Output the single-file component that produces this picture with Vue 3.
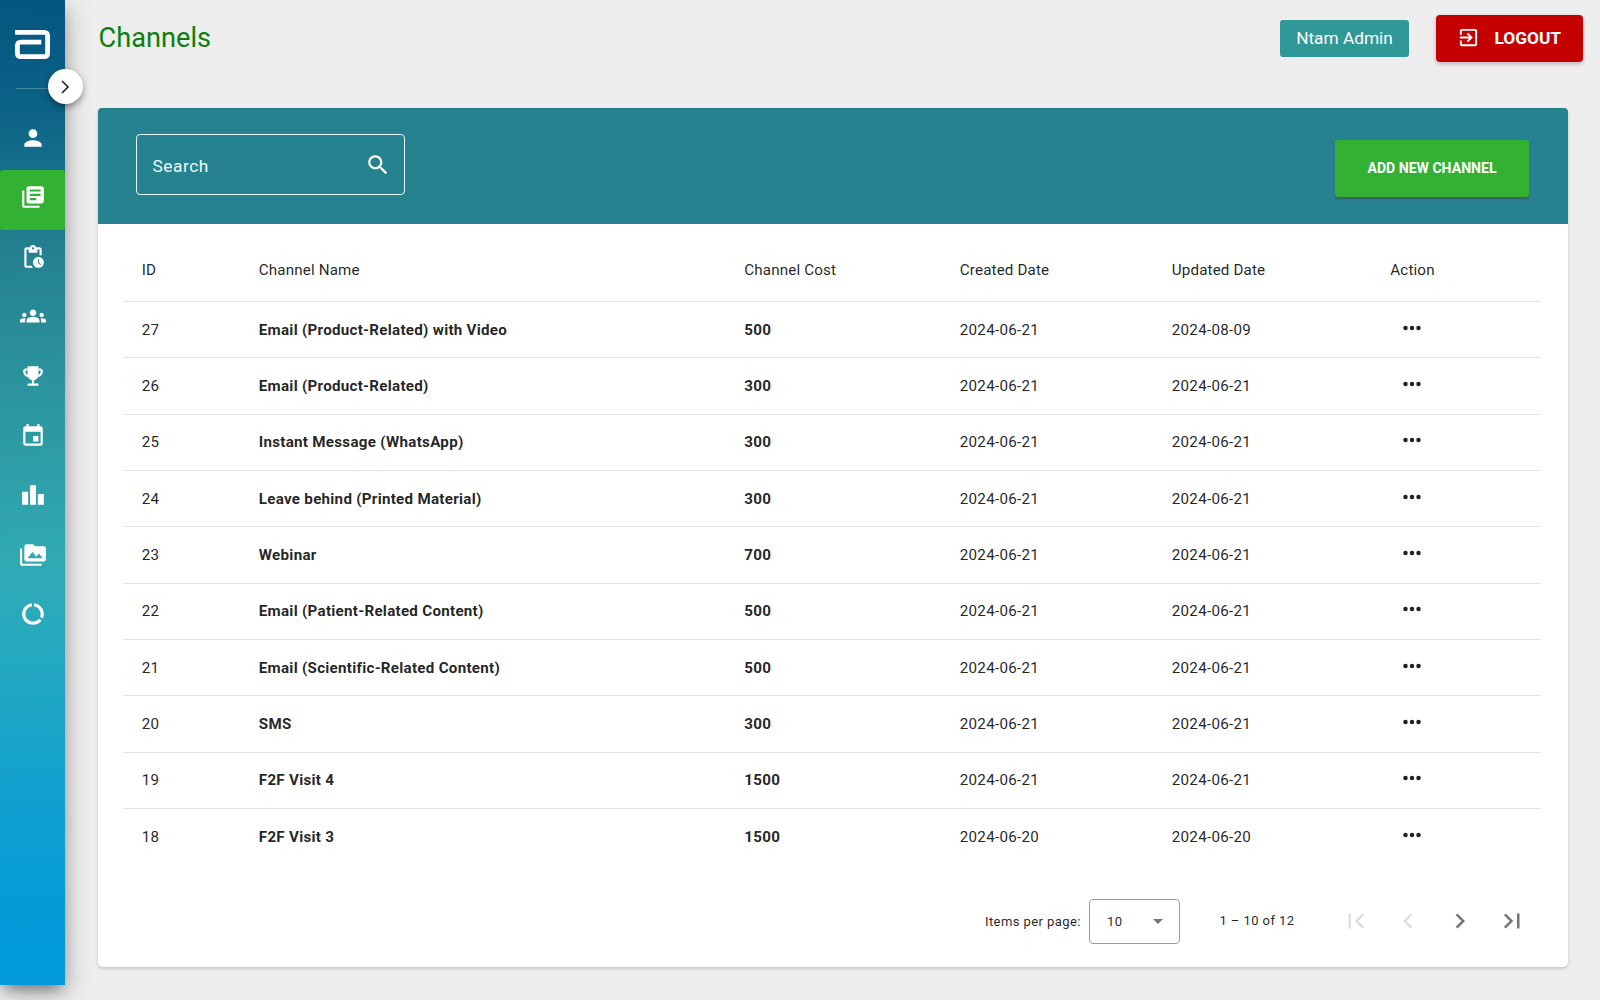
<script setup>
import { ref, computed } from 'vue'

const search = ref('')
const activeMenu = ref('channels')
const total = ref(12)
const pageSize = ref(10)

const menu = [
  { name: 'users', icon: 'M12 12c2.21 0 4-1.79 4-4s-1.79-4-4-4-4 1.79-4 4 1.79 4 4 4zm0 2c-2.67 0-8 1.34-8 4v2h16v-2c0-2.66-5.33-4-8-4z' },
  { name: 'channels', icon: 'M4 6H2v14c0 1.1.9 2 2 2h14v-2H4V6zm16-4H8c-1.1 0-2 .9-2 2v12c0 1.1.9 2 2 2h12c1.1 0 2-.9 2-2V4c0-1.1-.9-2-2-2zm-1 9H9V9h10v2zm-4 4H9v-2h6v2zm4-8H9V5h10v2z' },
  { name: 'pending', icon: 'M17 12c-2.76 0-5 2.24-5 5s2.24 5 5 5 5-2.24 5-5-2.24-5-5-5zm1.65 7.35L16.5 17.2V14h1v2.79l1.85 1.85-.7.71zM18 3h-3.18C14.4 1.84 13.3 1 12 1s-2.4.84-2.82 2H6c-1.1 0-2 .9-2 2v15c0 1.1.9 2 2 2h6.11c-.59-.57-1.07-1.25-1.42-2H6V5h2v3h8V5h2v5.08c.71.1 1.38.31 2 .6V5c0-1.1-.9-2-2-2zm-6 2c-.55 0-1-.45-1-1s.45-1 1-1 1 .45 1 1-.45 1-1 1z' },
  { name: 'groups', icon: 'M12 12.75c1.63 0 3.07.39 4.24.9 1.08.48 1.76 1.56 1.76 2.73V18H6v-1.61c0-1.18.68-2.26 1.76-2.73 1.17-.52 2.61-.91 4.24-.91zM4 13c1.1 0 2-.9 2-2s-.9-2-2-2-2 .9-2 2 .9 2 2 2zm1.13 1.1c-.37-.06-.74-.1-1.13-.1-.99 0-1.93.21-2.78.58C.48 14.9 0 15.62 0 16.43V18h4.5v-1.61c0-.83.23-1.61.63-2.29zM20 13c1.1 0 2-.9 2-2s-.9-2-2-2-2 .9-2 2 .9 2 2 2zm4 3.43c0-.81-.48-1.53-1.22-1.85-.85-.37-1.79-.58-2.78-.58-.39 0-.76.04-1.13.1.4.68.63 1.46.63 2.29V18H24v-1.57zM12 6c1.66 0 3 1.34 3 3s-1.34 3-3 3-3-1.34-3-3 1.34-3 3-3z' },
  { name: 'awards', icon: 'M19 5h-2V3H7v2H5c-1.1 0-2 .9-2 2v1c0 2.55 1.92 4.63 4.39 4.94.63 1.5 1.98 2.63 3.61 2.96V19H7v2h10v-2h-4v-3.1c1.63-.33 2.98-1.46 3.61-2.96C19.08 12.63 21 10.55 21 8V7c0-1.1-.9-2-2-2zM5 8V7h2v3.82C5.84 10.4 5 9.3 5 8zm14 0c0 1.3-.84 2.4-2 2.82V7h2v1z' },
  { name: 'events', icon: 'M17 12h-5v5h5v-5zM16 1v2H8V1H6v2H5c-1.11 0-1.99.9-1.99 2L3 19c0 1.1.89 2 2 2h14c1.1 0 2-.9 2-2V5c0-1.1-.9-2-2-2h-1V1h-2zm3 18H5V8h14v11z' },
  { name: 'reports', icon: 'M7.5 21H2V9h5.5v12zm7.25-18h-5.5v18h5.5V3zM22 11h-5.5v10H22V11z' },
  { name: 'media', icon: 'M2 6H0v5h.01L0 20c0 1.1.9 2 2 2h18v-2H2V6zm20-2h-8l-2-2H6c-1.1 0-1.99.9-1.99 2L4 16c0 1.1.9 2 2 2h16c1.1 0 2-.9 2-2V6c0-1.1-.9-2-2-2zM7 15l4.5-6 3.5 4.51 2.5-3.01L21 15H7z' },
  { name: 'usage', icon: 'M13 2.05v3.03c3.39.49 6 3.39 6 6.92 0 .9-.18 1.75-.48 2.54l2.6 1.53c.56-1.24.88-2.62.88-4.07 0-5.18-3.95-9.45-9-9.95zM12 19c-3.87 0-7-3.13-7-7 0-3.53 2.61-6.43 6-6.92V2.05c-5.06.5-9 4.76-9 9.95 0 5.52 4.47 10 9.99 10 3.31 0 6.24-1.61 8.06-4.09l-2.6-1.53C16.17 17.98 14.21 19 12 19z' },
]

const channels = ref([
  { id: 27, name: 'Email (Product-Related) with Video', cost: 500, created: '2024-06-21', updated: '2024-08-09' },
  { id: 26, name: 'Email (Product-Related)', cost: 300, created: '2024-06-21', updated: '2024-06-21' },
  { id: 25, name: 'Instant Message (WhatsApp)', cost: 300, created: '2024-06-21', updated: '2024-06-21' },
  { id: 24, name: 'Leave behind (Printed Material)', cost: 300, created: '2024-06-21', updated: '2024-06-21' },
  { id: 23, name: 'Webinar', cost: 700, created: '2024-06-21', updated: '2024-06-21' },
  { id: 22, name: 'Email (Patient-Related Content)', cost: 500, created: '2024-06-21', updated: '2024-06-21' },
  { id: 21, name: 'Email (Scientific-Related Content)', cost: 500, created: '2024-06-21', updated: '2024-06-21' },
  { id: 20, name: 'SMS', cost: 300, created: '2024-06-21', updated: '2024-06-21' },
  { id: 19, name: 'F2F Visit 4', cost: 1500, created: '2024-06-21', updated: '2024-06-21' },
  { id: 18, name: 'F2F Visit 3', cost: 1500, created: '2024-06-20', updated: '2024-06-20' },
])

const rows = computed(() =>
  channels.value.filter((c) => c.name.toLowerCase().includes(search.value.toLowerCase()))
)

const pagers = [
  { name: 'first', disabled: true, icon: 'M18.41 16.59L13.82 12l4.59-4.59L17 6l-6 6 6 6zM6 6h2v12H6z' },
  { name: 'prev', disabled: true, icon: 'M15.41 7.41L14 6l-6 6 6 6 1.41-1.41L10.83 12z' },
  { name: 'next', disabled: false, icon: 'M10 6L8.59 7.41 13.17 12l-4.58 4.59L10 18l6-6z' },
  { name: 'last', disabled: false, icon: 'M5.59 7.41L10.18 12l-4.59 4.59L7 18l6-6-6-6zM16 6h2v12h-2z' },
]
</script>

<template>
  <div class="layout">
    <aside class="sidebar">
      <svg class="logo" viewBox="0 0 35 29">
        <path d="M0 2.4H29Q32.6 2.4 32.6 6V23Q32.6 26.6 29 26.6H6Q2.4 26.6 2.4 23V15.8Q2.4 12.2 6 12.2H26.3" />
      </svg>
      <div class="divider"></div>
      <button class="toggle">
        <svg viewBox="0 0 12 14"><path d="M3 1l6 6-6 6" /></svg>
      </button>
      <nav>
        <a
          v-for="item in menu"
          :key="item.name"
          class="nav-item"
          :class="{ active: item.name === activeMenu }"
          @click="activeMenu = item.name"
        >
          <svg class="icon" viewBox="0 0 24 24"><path :d="item.icon" /></svg>
        </a>
      </nav>
    </aside>

    <main class="content">
      <header class="topbar">
        <h1>Channels</h1>
        <span class="user">Ntam Admin</span>
        <button class="logout">
          <svg viewBox="0 0 24 24"><path d="M10.09 15.59L11.5 17l5-5-5-5-1.41 1.41L12.67 11H3v2h9.67l-2.58 2.59zM19 3H5c-1.11 0-2 .9-2 2v4h2V5h14v14H5v-4H3v4c0 1.1.89 2 2 2h14c1.1 0 2-.9 2-2V5c0-1.1-.9-2-2-2z" /></svg>
          <span>LOGOUT</span>
        </button>
      </header>

      <section class="card">
        <div class="toolbar">
          <label class="search">
            <input v-model="search" placeholder="Search">
            <svg class="icon" viewBox="0 0 24 24"><path d="M15.5 14h-.79l-.28-.27C15.41 12.59 16 11.11 16 9.5 16 5.91 13.09 3 9.5 3S3 5.91 3 9.5 5.91 16 9.5 16c1.61 0 3.09-.59 4.23-1.57l.27.28v.79l5 4.99L20.49 19l-4.99-5zm-6 0C7.01 14 5 11.99 5 9.5S7.01 5 9.5 5 14 7.01 14 9.5 11.99 14 9.5 14z" /></svg>
          </label>
          <button class="add">ADD NEW CHANNEL</button>
        </div>

        <table>
          <colgroup>
            <col class="c-id">
            <col class="c-name">
            <col class="c-cost">
            <col class="c-created">
            <col class="c-updated">
            <col>
          </colgroup>
          <thead>
            <tr>
              <th>ID</th>
              <th>Channel Name</th>
              <th>Channel Cost</th>
              <th>Created Date</th>
              <th>Updated Date</th>
              <th>Action</th>
            </tr>
          </thead>
          <tbody>
            <tr v-for="row in rows" :key="row.id">
              <td>{{ row.id }}</td>
              <td class="bold">{{ row.name }}</td>
              <td class="bold">{{ row.cost }}</td>
              <td>{{ row.created }}</td>
              <td>{{ row.updated }}</td>
              <td>
                <svg class="icon more" viewBox="0 0 24 24">
                  <circle cx="6" cy="12" r="2.1" />
                  <circle cx="12" cy="12" r="2.1" />
                  <circle cx="18" cy="12" r="2.1" />
                </svg>
              </td>
            </tr>
          </tbody>
        </table>

        <footer class="paginator">
          <span class="per-page">Items per page:</span>
          <div class="select">
            <span>{{ pageSize }}</span>
            <i class="arrow"></i>
          </div>
          <span class="range">1 – {{ pageSize }} of {{ total }}</span>
          <button v-for="p in pagers" :key="p.name" class="pager" :disabled="p.disabled">
            <svg viewBox="0 0 24 24"><path :d="p.icon" /></svg>
          </button>
        </footer>
      </section>
    </main>
  </div>
</template>

<style>
body {
  background: #eeeeee;
}
</style>

<style scoped>
.layout {
  display: flex;
  height: 1000px;
  overflow: hidden;
  background: #eeeeee;
  font-family: Roboto, sans-serif;
  color: rgba(0, 0, 0, 0.87);
}

.layout * {
  box-sizing: border-box;
}

button {
  font-family: inherit;
  border: none;
  padding: 0;
  cursor: pointer;
}

svg {
  display: block;
  fill: currentColor;
}

.icon {
  width: 26px;
  height: 26px;
}

.sidebar {
  position: relative;
  flex: none;
  width: 65px;
  height: 985px;
  padding-top: 30px;
  color: #fff;
  background: linear-gradient(178deg, #04567f 0%, #0b6287 11%, #24808f 25%, #2d99a2 43%, #30aab3 57%, #25a9c0 66%, #0c9fd2 84%, #0099da 97%);
  box-shadow: 0 9px 12px -5px rgba(0, 0, 0, 0.35), 3px 8px 24px rgba(60, 50, 50, 0.32);
}

.logo {
  width: 35px;
  height: 29px;
  margin-left: 15px;
  fill: none;
  stroke: #fff;
  stroke-width: 4.8;
}

.divider {
  width: 33px;
  height: 1px;
  margin: 29px 0 0 16px;
  background: rgba(255, 255, 255, 0.25);
}

.toggle {
  position: absolute;
  top: 69px;
  left: 47.5px;
  width: 35px;
  height: 35px;
  border-radius: 50%;
  background: #fff;
  color: #222;
  display: flex;
  align-items: center;
  justify-content: center;
  box-shadow: 0 3px 6px rgba(0, 0, 0, 0.4);
}

.toggle svg {
  width: 12px;
  height: 14px;
  fill: none;
  stroke: currentColor;
  stroke-width: 1.6;
}

nav {
  padding-top: 21.6px;
}

.nav-item {
  display: flex;
  justify-content: center;
  height: 59.6px;
  padding-top: 14px;
  border-radius: 3px;
  cursor: pointer;
}

.nav-item.active {
  background: #32b132;
}

.content {
  flex: 1;
  padding: 0 17px 0 32.5px;
}

.topbar {
  display: flex;
  align-items: center;
  height: 76px;
}

h1 {
  flex: 1;
  margin: 0 0 0 1px;
  font-size: 27.2px;
  font-weight: 400;
  color: #0a800a;
}

.user {
  width: 129px;
  height: 37px;
  margin-right: 27px;
  line-height: 37px;
  text-align: center;
  font-size: 17.3px;
  color: #fff;
  background: #309896;
  border-radius: 3px;
}

.logout {
  display: flex;
  align-items: center;
  width: 147px;
  height: 47px;
  padding: 0 0 1px 21px;
  gap: 14.5px;
  font-size: 17.3px;
  font-weight: 700;
  color: #fff;
  background: #c40000;
  border-radius: 4px;
  box-shadow: 0 2px 4px rgba(60, 0, 60, 0.25);
}

.logout svg {
  width: 23px;
  height: 23px;
}

.card {
  display: flex;
  flex-direction: column;
  width: 1470px;
  height: 858.6px;
  margin-top: 32.4px;
  background: #fff;
  border-radius: 5px;
  box-shadow: 0 2px 3px rgba(0, 0, 0, 0.1), 0 1px 4px rgba(0, 0, 0, 0.07);
}

.toolbar {
  display: flex;
  align-items: flex-start;
  justify-content: space-between;
  flex: none;
  height: 115.6px;
  padding: 26px 38.5px 0 38px;
  background: #26828f;
  border-radius: 4px 4px 0 0;
}

.search {
  display: flex;
  align-items: center;
  width: 269px;
  height: 61px;
  padding: 1px 13px 0 16px;
  border: 1px solid #e4f8fa;
  border-radius: 4px;
  color: #fff;
}

.search input {
  flex: 1;
  min-width: 0;
  padding: 2px 0 0;
  border: none;
  outline: none;
  background: none;
  font-family: inherit;
  font-size: 17.3px;
  letter-spacing: 0.54px;
  color: #fff;
}

.search input::placeholder {
  color: #f0fafa;
  opacity: 1;
}

.add {
  width: 194px;
  height: 57px;
  margin-top: 5.4px;
  padding-bottom: 1px;
  font-size: 14.08px;
  font-weight: 700;
  color: #fff;
  background: #32b132;
  border-radius: 3px;
  box-shadow: 0 2px 2px rgba(80, 50, 60, 0.5);
}

table {
  flex: none;
  width: 1416px;
  margin-left: 26.5px;
  table-layout: fixed;
  border-collapse: separate;
  border-spacing: 0;
  font-size: 15.17px;
  letter-spacing: 0.27px;
}

.c-id { width: 117px; }
.c-name { width: 485.5px; }
.c-cost { width: 215.5px; }
.c-created { width: 212px; }
.c-updated { width: 218.5px; }

th,
td {
  padding: 0 0 0 17.8px;
  text-align: left;
  white-space: nowrap;
  border-bottom: 1px solid #e2e2e2;
}

th {
  height: 78px;
  padding-top: 16px;
  font-weight: 400;
  letter-spacing: 0.15px;
}

td {
  height: 56.33px;
}

.bold {
  font-weight: 700;
}

tbody tr:last-child td {
  border-bottom: none;
}

.more {
  margin: -4px 0 0 8.5px;
}

.paginator {
  display: flex;
  align-items: center;
  justify-content: flex-end;
  height: 61px;
  margin-top: 25.5px;
  padding-right: 30px;
  font-size: 13px;
  letter-spacing: 0.43px;
}

.per-page {
  margin-right: 8.5px;
}

.select {
  display: flex;
  align-items: center;
  justify-content: space-between;
  width: 91px;
  height: 45px;
  padding: 0 16.5px;
  border: 1px solid #9c9c9c;
  border-radius: 4px;
}

.arrow {
  border: 5.5px solid transparent;
  border-top-color: #757575;
  border-bottom: none;
}

.range {
  margin: -2px 35px 0 39px;
}

.pager {
  display: flex;
  align-items: center;
  justify-content: center;
  width: 52px;
  height: 52px;
  background: none;
  color: #757575;
}

.pager svg {
  width: 30px;
  height: 30px;
}

.pager:disabled {
  color: #dedede;
}
</style>
